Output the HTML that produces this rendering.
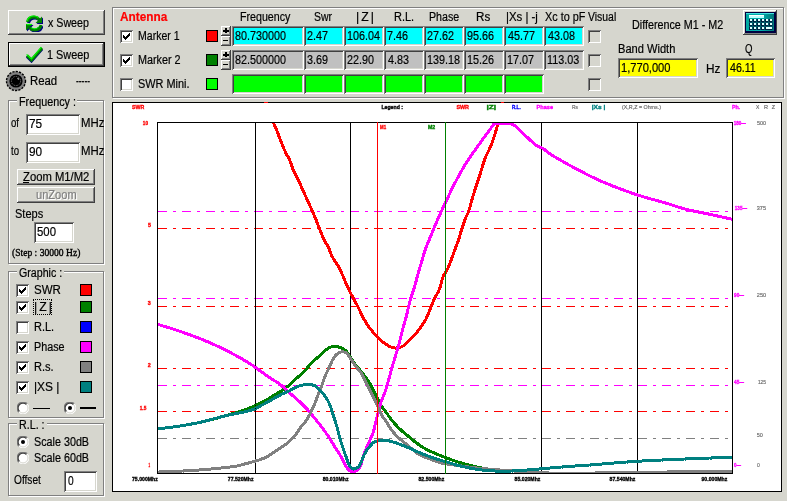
<!DOCTYPE html>
<html><head><meta charset="utf-8"><title>Antenna Analyzer</title>
<style>
html,body{margin:0;padding:0}
body{width:787px;height:501px;overflow:hidden;background:#D6D6CE;position:relative;
 font-family:"Liberation Sans",sans-serif;font-size:12px;color:#000}
.a{position:absolute;box-sizing:border-box}
.t{position:absolute;white-space:nowrap;line-height:14px;font-size:12px;transform-origin:0 0;display:block;-webkit-text-stroke-width:0.2px}
.btn{position:absolute;box-sizing:border-box;background:#D6D6CE;
 box-shadow:inset -1px -1px #404040,inset 1px 1px #fff,inset -2px -2px #808080,inset 2px 2px #D6D6CE}
.btnd{position:absolute;box-sizing:border-box;background:#D6D6CE;border:1px solid #000;
 box-shadow:inset -1px -1px #404040,inset 1px 1px #fff,inset -2px -2px #808080,inset 2px 2px #D6D6CE}
.ed{position:absolute;box-sizing:border-box;background:#fff;
 box-shadow:inset 1px 1px #808080,inset -1px -1px #fff,inset 2px 2px #404040,inset -2px -2px #D6D6CE}
.gb{position:absolute;box-sizing:border-box;border:1px solid #808080;
 box-shadow:1px 1px 0 #fff,inset 1px 1px 0 #fff}
.gl{position:absolute;background:#D6D6CE;height:12px}
.sw{position:absolute;box-sizing:border-box;border:1px solid #000;width:12px;height:12px}
.cb{position:absolute;box-sizing:border-box;width:13px;height:13px;background:#fff;
 box-shadow:inset 1px 1px #808080,inset -1px -1px #fff,inset 2px 2px #404040,inset -2px -2px #D6D6CE}
.cb svg,.rb svg{position:absolute;left:0;top:0}
.rb{position:absolute;width:12px;height:12px}
</style></head>
<body>
<div id="app" style="position:absolute;left:0;top:0;width:787px;height:501px;will-change:transform">
<div class="btn" style="left:8px;top:10px;width:97px;height:25px"></div>
<svg class="a" style="left:26px;top:15px" width="17" height="17" viewBox="0 0 17 17"><g transform="translate(1,1)"><path d="M1.5 7Q2.5 2 8 2Q11 2 13 4.5" fill="none" stroke="#000080" stroke-width="3"/><path d="M16 1.5V8H9.5z" fill="#000080"/><path d="M15 10Q14 15 8.5 15Q5.5 15 3.5 12.5" fill="none" stroke="#000080" stroke-width="3"/><path d="M0 15.5V9H6.5z" fill="#000080"/></g><path d="M1.5 7Q2.5 2 8 2Q11 2 13 4.5" fill="none" stroke="#008000" stroke-width="3"/><path d="M16 1.5V8H9.5z" fill="#008000"/><path d="M15 10Q14 15 8.5 15Q5.5 15 3.5 12.5" fill="none" stroke="#008000" stroke-width="3"/><path d="M0 15.5V9H6.5z" fill="#008000"/><path d="M1 6Q2.5 1 8 1Q10.5 1 12.5 2.5" fill="none" stroke="#00FF00" stroke-width="1.2"/><path d="M0.5 9.5H6" fill="none" stroke="#00FF00" stroke-width="1.2"/><path d="M5 12.5Q6.5 13.8 8.5 13.8Q11 13.8 12.5 12" fill="none" stroke="#00FF00" stroke-width="1"/></svg>
<span class="t" style="left:47.50px;top:16px;transform:scaleX(0.8891);">x Sweep</span>
<div class="btnd" style="left:8px;top:42px;width:97px;height:25px"></div>
<svg class="a" style="left:25px;top:46px" width="19" height="17" viewBox="0 0 19 17"><path d="M2 10.5L6.5 15L17 3" fill="none" stroke="#000080" stroke-width="3"/><path d="M2 9.5L6.5 14L17 2" fill="none" stroke="#008000" stroke-width="3"/><path d="M1.6 8.4L6.5 13L16.4 1.2" fill="none" stroke="#00FF00" stroke-width="1.2"/></svg>
<span class="t" style="left:47.09px;top:48px;transform:scaleX(0.9067);">1 Sweep</span>
<svg class="a" style="left:5px;top:70px" width="22" height="22" viewBox="0 0 22 22"><circle cx="11" cy="11" r="9.5" fill="#808080" stroke="#000" stroke-width="1.4" stroke-dasharray="2.2 1.2"/><circle cx="11" cy="11" r="6.6" fill="#000"/><circle cx="11" cy="11" r="4.6" fill="none" stroke="#808080" stroke-width="0.8" stroke-dasharray="1.6 1"/><path d="M12.5 8L14 9.5" stroke="#a0a0a0" stroke-width="1.2"/></svg>
<span class="t" style="left:29.75px;top:74px;transform:scaleX(0.9481);">Read</span>
<span class="t" style="left:76.00px;top:74px;transform:scaleX(0.7000);">-----</span>
<div class="gb" style="left:8px;top:100px;width:96px;height:164px"></div><div class="gl" style="left:16.7px;top:96px;width:60.8px;height:10px"></div><span class="t" style="left:18.80px;top:95px;transform:scaleX(0.8984);">Frequency :</span>
<span class="t" style="left:11.00px;top:116px;transform:scaleX(0.8000);">of</span>
<div class="ed" style="left:26px;top:114px;width:54px;height:21px"></div>
<span class="t" style="left:28.89px;top:116px;transform:scaleX(0.9077);font-size:13px;line-height:15px;">75</span>
<span class="t" style="left:80.85px;top:116px;transform:scaleX(0.9478);">MHz</span>
<span class="t" style="left:11.00px;top:144px;transform:scaleX(0.8000);">to</span>
<div class="ed" style="left:26px;top:142px;width:54px;height:21px"></div>
<span class="t" style="left:28.89px;top:144px;transform:scaleX(0.9077);font-size:13px;line-height:15px;">90</span>
<span class="t" style="left:80.85px;top:144px;transform:scaleX(0.9478);">MHz</span>
<div class="btn" style="left:17px;top:169px;width:78px;height:16px"></div>
<span class="t" style="left:22.70px;top:170px;transform:scaleX(0.9386);">Zoom M1/M2</span>
<div class="a" style="left:23px;top:182px;width:6px;height:1px;background:#000"></div>
<div class="btn" style="left:17px;top:187px;width:78px;height:16px"></div>
<span class="t" style="left:36.58px;top:189px;transform:scaleX(0.9238);color:#fff;">unZoom</span>
<span class="t" style="left:35.58px;top:188px;transform:scaleX(0.9238);color:#808080;">unZoom</span>
<span class="t" style="left:15.48px;top:207px;transform:scaleX(0.9172);">Steps</span>
<div class="ed" style="left:34px;top:222px;width:40px;height:21px"></div>
<span class="t" style="left:36.83px;top:224px;transform:scaleX(0.8750);font-size:13px;line-height:15px;">500</span>
<span class="t" style="left:12.40px;top:246px;transform:scaleX(0.9577);font-size:10px;font-family:'Liberation Serif',serif;-webkit-text-stroke:0.35px #000;">(Step : 30000 Hz)</span>
<div class="gb" style="left:8px;top:271px;width:96px;height:147px"></div><div class="gl" style="left:16.7px;top:267px;width:47.7px;height:10px"></div><span class="t" style="left:18.81px;top:266px;transform:scaleX(0.8872);">Graphic :</span>
<div class="cb" style="left:16px;top:284px;background:#fff"><svg width="13" height="13" viewBox="0 0 13 13" shape-rendering="crispEdges"><path d="M3 5h1v3h-1zM4 6h1v3h-1zM5 7h1v3h-1zM6 6h1v3h-1zM7 5h1v3h-1zM8 4h1v3h-1zM9 3h1v3h-1z" fill="#000"/></svg></div>
<span class="t" style="left:33.74px;top:283px;transform:scaleX(0.9577);">SWR</span>
<div class="sw" style="left:80px;top:284px;background:#FF0000"></div>
<div class="cb" style="left:16px;top:301px;background:#fff"><svg width="13" height="13" viewBox="0 0 13 13" shape-rendering="crispEdges"><path d="M3 5h1v3h-1zM4 6h1v3h-1zM5 7h1v3h-1zM6 6h1v3h-1zM7 5h1v3h-1zM8 4h1v3h-1zM9 3h1v3h-1z" fill="#000"/></svg></div>
<span class="t" style="left:33.68px;top:300px;transform:scaleX(1.0187);letter-spacing:2px;">|Z|</span>
<div class="sw" style="left:80px;top:301px;background:#008000"></div>
<div class="cb" style="left:16px;top:321px;background:#fff"></div>
<span class="t" style="left:33.79px;top:320px;transform:scaleX(0.9150);">R.L.</span>
<div class="sw" style="left:80px;top:321px;background:#0000FF"></div>
<div class="cb" style="left:16px;top:341px;background:#fff"><svg width="13" height="13" viewBox="0 0 13 13" shape-rendering="crispEdges"><path d="M3 5h1v3h-1zM4 6h1v3h-1zM5 7h1v3h-1zM6 6h1v3h-1zM7 5h1v3h-1zM8 4h1v3h-1zM9 3h1v3h-1z" fill="#000"/></svg></div>
<span class="t" style="left:33.80px;top:340px;transform:scaleX(0.8970);">Phase</span>
<div class="sw" style="left:80px;top:341px;background:#FF00FF"></div>
<div class="cb" style="left:16px;top:361px;background:#fff"><svg width="13" height="13" viewBox="0 0 13 13" shape-rendering="crispEdges"><path d="M3 5h1v3h-1zM4 6h1v3h-1zM5 7h1v3h-1zM6 6h1v3h-1zM7 5h1v3h-1zM8 4h1v3h-1zM9 3h1v3h-1z" fill="#000"/></svg></div>
<span class="t" style="left:33.78px;top:360px;transform:scaleX(0.9211);">R.s.</span>
<div class="sw" style="left:80px;top:361px;background:#808080"></div>
<div class="cb" style="left:16px;top:381px;background:#fff"><svg width="13" height="13" viewBox="0 0 13 13" shape-rendering="crispEdges"><path d="M3 5h1v3h-1zM4 6h1v3h-1zM5 7h1v3h-1zM6 6h1v3h-1zM7 5h1v3h-1zM8 4h1v3h-1zM9 3h1v3h-1z" fill="#000"/></svg></div>
<span class="t" style="left:33.71px;top:380px;transform:scaleX(0.9917);">|XS |</span>
<div class="sw" style="left:80px;top:381px;background:#008080"></div>
<div class="a" style="left:33px;top:299px;width:19px;height:16px;border:1px dotted #000"></div>
<div class="rb" style="left:17px;top:402px"><svg width="12" height="12" viewBox="0 0 12 12"><circle cx="6" cy="6" r="5.5" fill="#fff"/><path d="M10.2 1.8A5.5 5.5 0 0 0 1.8 10.2" fill="none" stroke="#808080" stroke-width="1.3"/><path d="M1.8 10.2A5.5 5.5 0 0 0 10.2 1.8" fill="none" stroke="#fff" stroke-width="1"/><path d="M9.5 2.5A4.6 4.6 0 0 0 2.5 9.5" fill="none" stroke="#404040" stroke-width="1.3"/><path d="M2.5 9.5A4.6 4.6 0 0 0 9.5 2.5" fill="none" stroke="#D6D6CE" stroke-width="1"/></svg></div>
<div class="a" style="left:33px;top:408px;width:17px;height:1px;background:#000"></div>
<div class="rb" style="left:64px;top:402px"><svg width="12" height="12" viewBox="0 0 12 12"><circle cx="6" cy="6" r="5.5" fill="#fff"/><path d="M10.2 1.8A5.5 5.5 0 0 0 1.8 10.2" fill="none" stroke="#808080" stroke-width="1.3"/><path d="M1.8 10.2A5.5 5.5 0 0 0 10.2 1.8" fill="none" stroke="#fff" stroke-width="1"/><path d="M9.5 2.5A4.6 4.6 0 0 0 2.5 9.5" fill="none" stroke="#404040" stroke-width="1.3"/><path d="M2.5 9.5A4.6 4.6 0 0 0 9.5 2.5" fill="none" stroke="#D6D6CE" stroke-width="1"/><circle cx="6" cy="6" r="2" fill="#000"/></svg></div>
<div class="a" style="left:80px;top:407px;width:16px;height:2px;background:#000"></div>
<div class="gb" style="left:8px;top:423px;width:96px;height:73px"></div><div class="gl" style="left:16.7px;top:419px;width:30.1px;height:10px"></div><span class="t" style="left:18.81px;top:418px;transform:scaleX(0.8926);">R.L. :</span>
<div class="rb" style="left:17px;top:436px"><svg width="12" height="12" viewBox="0 0 12 12"><circle cx="6" cy="6" r="5.5" fill="#fff"/><path d="M10.2 1.8A5.5 5.5 0 0 0 1.8 10.2" fill="none" stroke="#808080" stroke-width="1.3"/><path d="M1.8 10.2A5.5 5.5 0 0 0 10.2 1.8" fill="none" stroke="#fff" stroke-width="1"/><path d="M9.5 2.5A4.6 4.6 0 0 0 2.5 9.5" fill="none" stroke="#404040" stroke-width="1.3"/><path d="M2.5 9.5A4.6 4.6 0 0 0 9.5 2.5" fill="none" stroke="#D6D6CE" stroke-width="1"/><circle cx="6" cy="6" r="2" fill="#000"/></svg></div>
<span class="t" style="left:33.70px;top:435px;transform:scaleX(0.8967);">Scale 30dB</span>
<div class="rb" style="left:17px;top:452px"><svg width="12" height="12" viewBox="0 0 12 12"><circle cx="6" cy="6" r="5.5" fill="#fff"/><path d="M10.2 1.8A5.5 5.5 0 0 0 1.8 10.2" fill="none" stroke="#808080" stroke-width="1.3"/><path d="M1.8 10.2A5.5 5.5 0 0 0 10.2 1.8" fill="none" stroke="#fff" stroke-width="1"/><path d="M9.5 2.5A4.6 4.6 0 0 0 2.5 9.5" fill="none" stroke="#404040" stroke-width="1.3"/><path d="M2.5 9.5A4.6 4.6 0 0 0 9.5 2.5" fill="none" stroke="#D6D6CE" stroke-width="1"/></svg></div>
<span class="t" style="left:33.70px;top:451px;transform:scaleX(0.8967);">Scale 60dB</span>
<span class="t" style="left:13.90px;top:473px;transform:scaleX(0.8438);">Offset</span>
<div class="ed" style="left:64px;top:471px;width:33px;height:21px"></div>
<span class="t" style="left:67.50px;top:473px;transform:scaleX(0.7857);font-size:13px;line-height:15px;">0</span>
<div class="gb" style="left:112px;top:7px;width:672px;height:91px"></div>
<span class="t" style="left:119.80px;top:10px;transform:scaleX(0.9833);color:#FF0000;font-weight:bold;">Antenna</span>
<span class="t" style="left:239.71px;top:10px;transform:scaleX(0.8875);">Frequency</span>
<span class="t" style="left:313.73px;top:10px;transform:scaleX(0.8700);">Swr</span>
<span class="t" style="left:355.68px;top:10px;transform:scaleX(1.0188);letter-spacing:2px;">|Z|</span>
<span class="t" style="left:393.78px;top:10px;transform:scaleX(0.9150);">R.L.</span>
<span class="t" style="left:428.81px;top:10px;transform:scaleX(0.8879);">Phase</span>
<span class="t" style="left:476.03px;top:10px;transform:scaleX(0.9692);">Rs</span>
<span class="t" style="left:505.65px;top:10px;transform:scaleX(0.9500);">|Xs | -j</span>
<span class="t" style="left:545.00px;top:10px;transform:scaleX(0.9045);">Xc to pF</span>
<span class="t" style="left:588.20px;top:10px;transform:scaleX(0.8687);">Visual</span>
<div class="cb" style="left:120px;top:30px;background:#fff"><svg width="13" height="13" viewBox="0 0 13 13" shape-rendering="crispEdges"><path d="M3 5h1v3h-1zM4 6h1v3h-1zM5 7h1v3h-1zM6 6h1v3h-1zM7 5h1v3h-1zM8 4h1v3h-1zM9 3h1v3h-1z" fill="#000"/></svg></div>
<span class="t" style="left:137.72px;top:29px;transform:scaleX(0.8783);">Marker 1</span>
<div class="sw" style="left:206px;top:30px;background:#FF0000"></div>
<div class="btn" style="left:221px;top:26px;width:10px;height:10px"></div><div class="a" style="left:223px;top:30px;width:6px;height:2px;background:#000"></div><div class="a" style="left:225px;top:28px;width:2px;height:5px;background:#000"></div><div class="btn" style="left:221px;top:36px;width:10px;height:10px"></div><div class="a" style="left:223px;top:40px;width:5px;height:1px;background:#000"></div>
<div class="ed" style="left:232px;top:26px;width:72px;height:20px;background:#00FFFF"></div>
<span class="t" style="left:235.17px;top:28px;transform:scaleX(0.8300);font-size:13px;line-height:15px;">80.730000</span>
<div class="ed" style="left:304px;top:26px;width:40px;height:20px;background:#00FFFF"></div>
<span class="t" style="left:306.97px;top:28px;transform:scaleX(0.8300);font-size:13px;line-height:15px;">2.47</span>
<div class="ed" style="left:344px;top:26px;width:40px;height:20px;background:#00FFFF"></div>
<span class="t" style="left:346.97px;top:28px;transform:scaleX(0.8300);font-size:13px;line-height:15px;">106.04</span>
<div class="ed" style="left:384px;top:26px;width:40px;height:20px;background:#00FFFF"></div>
<span class="t" style="left:386.97px;top:28px;transform:scaleX(0.8300);font-size:13px;line-height:15px;">7.46</span>
<div class="ed" style="left:424px;top:26px;width:40px;height:20px;background:#00FFFF"></div>
<span class="t" style="left:426.97px;top:28px;transform:scaleX(0.8300);font-size:13px;line-height:15px;">27.62</span>
<div class="ed" style="left:464px;top:26px;width:40px;height:20px;background:#00FFFF"></div>
<span class="t" style="left:466.97px;top:28px;transform:scaleX(0.8300);font-size:13px;line-height:15px;">95.66</span>
<div class="ed" style="left:504px;top:26px;width:40px;height:20px;background:#00FFFF"></div>
<span class="t" style="left:507.80px;top:28px;transform:scaleX(0.8300);font-size:13px;line-height:15px;">45.77</span>
<div class="ed" style="left:544px;top:26px;width:40px;height:20px;background:#00FFFF"></div>
<span class="t" style="left:547.80px;top:28px;transform:scaleX(0.8300);font-size:13px;line-height:15px;">43.08</span>
<div class="cb" style="left:588px;top:30px;background:#D6D6CE"></div>
<div class="cb" style="left:120px;top:54px;background:#fff"><svg width="13" height="13" viewBox="0 0 13 13" shape-rendering="crispEdges"><path d="M3 5h1v3h-1zM4 6h1v3h-1zM5 7h1v3h-1zM6 6h1v3h-1zM7 5h1v3h-1zM8 4h1v3h-1zM9 3h1v3h-1z" fill="#000"/></svg></div>
<span class="t" style="left:137.70px;top:53px;transform:scaleX(0.9000);">Marker 2</span>
<div class="sw" style="left:206px;top:54px;background:#008000"></div>
<div class="btn" style="left:221px;top:50px;width:10px;height:10px"></div><div class="a" style="left:223px;top:54px;width:6px;height:2px;background:#000"></div><div class="a" style="left:225px;top:52px;width:2px;height:5px;background:#000"></div><div class="btn" style="left:221px;top:60px;width:10px;height:10px"></div><div class="a" style="left:223px;top:64px;width:5px;height:1px;background:#000"></div>
<div class="ed" style="left:232px;top:50px;width:72px;height:20px;background:#C0C0C0"></div>
<span class="t" style="left:235.17px;top:52px;transform:scaleX(0.8300);font-size:13px;line-height:15px;">82.500000</span>
<div class="ed" style="left:304px;top:50px;width:40px;height:20px;background:#C0C0C0"></div>
<span class="t" style="left:306.97px;top:52px;transform:scaleX(0.8300);font-size:13px;line-height:15px;">3.69</span>
<div class="ed" style="left:344px;top:50px;width:40px;height:20px;background:#C0C0C0"></div>
<span class="t" style="left:346.97px;top:52px;transform:scaleX(0.8300);font-size:13px;line-height:15px;">22.90</span>
<div class="ed" style="left:384px;top:50px;width:40px;height:20px;background:#C0C0C0"></div>
<span class="t" style="left:387.80px;top:52px;transform:scaleX(0.8300);font-size:13px;line-height:15px;">4.83</span>
<div class="ed" style="left:424px;top:50px;width:40px;height:20px;background:#C0C0C0"></div>
<span class="t" style="left:426.97px;top:52px;transform:scaleX(0.8300);font-size:13px;line-height:15px;">139.18</span>
<div class="ed" style="left:464px;top:50px;width:40px;height:20px;background:#C0C0C0"></div>
<span class="t" style="left:466.97px;top:52px;transform:scaleX(0.8300);font-size:13px;line-height:15px;">15.26</span>
<div class="ed" style="left:504px;top:50px;width:40px;height:20px;background:#C0C0C0"></div>
<span class="t" style="left:506.97px;top:52px;transform:scaleX(0.8300);font-size:13px;line-height:15px;">17.07</span>
<div class="ed" style="left:544px;top:50px;width:40px;height:20px;background:#C0C0C0"></div>
<span class="t" style="left:546.97px;top:52px;transform:scaleX(0.8300);font-size:13px;line-height:15px;">113.03</span>
<div class="cb" style="left:588px;top:54px;background:#D6D6CE"></div>
<div class="cb" style="left:120px;top:78px;background:#fff"></div>
<span class="t" style="left:137.69px;top:77px;transform:scaleX(0.9091);">SWR Mini.</span>
<div class="sw" style="left:206px;top:78px;background:#00FF00"></div>
<div class="ed" style="left:232px;top:74px;width:72px;height:20px;background:#00FF00"></div>
<div class="ed" style="left:304px;top:74px;width:40px;height:20px;background:#00FF00"></div>
<div class="ed" style="left:344px;top:74px;width:40px;height:20px;background:#00FF00"></div>
<div class="ed" style="left:384px;top:74px;width:40px;height:20px;background:#00FF00"></div>
<div class="ed" style="left:424px;top:74px;width:40px;height:20px;background:#00FF00"></div>
<div class="ed" style="left:464px;top:74px;width:40px;height:20px;background:#00FF00"></div>
<div class="ed" style="left:504px;top:74px;width:40px;height:20px;background:#00FF00"></div>
<div class="cb" style="left:588px;top:78px;background:#D6D6CE"></div>
<span class="t" style="left:631.60px;top:18px;transform:scaleX(0.8960);">Difference M1 - M2</span>
<span class="t" style="left:617.58px;top:42px;transform:scaleX(0.9250);">Band Width</span>
<span class="t" style="left:744.50px;top:42px;transform:scaleX(0.8000);">Q</span>
<div class="ed" style="left:618px;top:58px;width:80px;height:20px;background:#FFFF00"></div>
<span class="t" style="left:620.84px;top:60px;transform:scaleX(0.8554);font-size:13px;line-height:15px;">1,770,000</span>
<span class="t" style="left:705.72px;top:62px;transform:scaleX(0.9846);">Hz</span>
<div class="ed" style="left:726px;top:58px;width:49px;height:20px;background:#FFFF00"></div>
<span class="t" style="left:729.70px;top:60px;transform:scaleX(0.8161);font-size:13px;line-height:15px;">46.11</span>
<div class="btn" style="left:743px;top:10px;width:34px;height:25px"></div>
<svg class="a" style="left:745px;top:12px" width="31" height="21" viewBox="0 0 31 21" shape-rendering="crispEdges"><defs><linearGradient id="cg" x1="0" y1="0" x2="1" y2="0"><stop offset="0" stop-color="#00A8A0"/><stop offset="0.5" stop-color="#00B0B0"/><stop offset="1" stop-color="#007878"/></linearGradient></defs><rect x="0" y="0" width="31" height="21" fill="#000040"/><rect x="1" y="1" width="28" height="18" fill="url(#cg)"/><rect x="1" y="1" width="28" height="1" fill="#40E0E0"/><rect x="4" y="7" width="24" height="11" fill="#005868"/><rect x="4" y="3" width="15" height="3" fill="#C0FFFF"/><rect x="4" y="3" width="15" height="1" fill="#FFFFFF"/><rect x="4" y="7" width="3" height="3" fill="#002040"/><rect x="5" y="7" width="2" height="2" fill="#E0FFFF"/><rect x="8" y="7" width="3" height="3" fill="#002040"/><rect x="9" y="7" width="2" height="2" fill="#E0FFFF"/><rect x="12" y="7" width="3" height="3" fill="#002040"/><rect x="13" y="7" width="2" height="2" fill="#E0FFFF"/><rect x="16" y="7" width="3" height="3" fill="#002040"/><rect x="17" y="7" width="2" height="2" fill="#E0FFFF"/><rect x="20" y="7" width="3" height="3" fill="#002040"/><rect x="21" y="7" width="2" height="2" fill="#E0FFFF"/><rect x="24" y="7" width="3" height="3" fill="#002040"/><rect x="25" y="7" width="2" height="2" fill="#E0FFFF"/><rect x="4" y="11" width="3" height="3" fill="#002040"/><rect x="5" y="11" width="2" height="2" fill="#E0FFFF"/><rect x="8" y="11" width="3" height="3" fill="#002040"/><rect x="9" y="11" width="2" height="2" fill="#E0FFFF"/><rect x="12" y="11" width="3" height="3" fill="#002040"/><rect x="13" y="11" width="2" height="2" fill="#E0FFFF"/><rect x="16" y="11" width="3" height="3" fill="#002040"/><rect x="17" y="11" width="2" height="2" fill="#E0FFFF"/><rect x="20" y="11" width="3" height="3" fill="#002040"/><rect x="21" y="11" width="2" height="2" fill="#E0FFFF"/><rect x="24" y="11" width="3" height="3" fill="#002040"/><rect x="25" y="11" width="2" height="2" fill="#E0FFFF"/><rect x="4" y="15" width="3" height="3" fill="#002040"/><rect x="5" y="15" width="2" height="2" fill="#E0FFFF"/><rect x="8" y="15" width="3" height="3" fill="#002040"/><rect x="9" y="15" width="2" height="2" fill="#E0FFFF"/><rect x="12" y="15" width="3" height="3" fill="#002040"/><rect x="13" y="15" width="2" height="2" fill="#E0FFFF"/><rect x="16" y="15" width="3" height="3" fill="#002040"/><rect x="17" y="15" width="2" height="2" fill="#E0FFFF"/><rect x="20" y="15" width="7" height="3" fill="#002040"/><rect x="21" y="15" width="6" height="2" fill="#E0FFFF"/></svg>
<svg class="a" style="left:0;top:0" width="787" height="501" viewBox="0 0 787 501" font-family="&quot;Liberation Sans&quot;,sans-serif">
<rect x="112.5" y="102.5" width="669" height="389" fill="#fff" stroke="#000" stroke-width="1" shape-rendering="crispEdges"/>
<rect x="264" y="102" width="4" height="1" fill="#FF0000"/><rect x="501" y="102" width="3" height="1" fill="#FF0000"/>
<g>
<line x1="158" y1="228.5" x2="729" y2="228.5" stroke="#FF0000" stroke-width="1" stroke-dasharray="9 6 3 6" shape-rendering="crispEdges"/>
<line x1="158" y1="306.5" x2="729" y2="306.5" stroke="#FF0000" stroke-width="1" stroke-dasharray="9 6 3 6" shape-rendering="crispEdges"/>
<line x1="158" y1="368.5" x2="729" y2="368.5" stroke="#FF0000" stroke-width="1" stroke-dasharray="9 6 3 6" shape-rendering="crispEdges"/>
<line x1="158" y1="411.5" x2="729" y2="411.5" stroke="#FF0000" stroke-width="1" stroke-dasharray="9 6 3 6" shape-rendering="crispEdges"/>
<line x1="158" y1="211.5" x2="729" y2="211.5" stroke="#FF00FF" stroke-width="1" stroke-dasharray="9 6 3 6" shape-rendering="crispEdges"/>
<line x1="158" y1="298.5" x2="729" y2="298.5" stroke="#FF00FF" stroke-width="1" stroke-dasharray="9 6 3 6" shape-rendering="crispEdges"/>
<line x1="158" y1="385.5" x2="729" y2="385.5" stroke="#FF00FF" stroke-width="1" stroke-dasharray="9 6 3 6" shape-rendering="crispEdges"/>
<line x1="158" y1="438.5" x2="729" y2="438.5" stroke="#808080" stroke-width="1" stroke-dasharray="9 6 3 6" shape-rendering="crispEdges"/>
</g>
<g shape-rendering="crispEdges">
<rect x="255" y="122" width="1" height="352" fill="#000"/>
<rect x="350" y="122" width="1" height="352" fill="#000"/>
<rect x="541" y="122" width="1" height="352" fill="#000"/>
<rect x="637" y="122" width="1" height="352" fill="#000"/>
<rect x="157.5" y="122.5" width="575" height="351" fill="none" stroke="#000" stroke-width="1"/>
</g>
<clipPath id="cp"><rect x="158" y="123" width="574" height="350"/></clipPath>
<g clip-path="url(#cp)" shape-rendering="crispEdges">
<polyline points="273.2,122.0 274.2,124.3 275.2,126.7 276.2,129.1 277.2,131.6 278.2,134.1 279.2,136.7 280.2,139.4 281.2,142.1 282.2,144.6 283.2,147.0 284.2,149.4 285.2,151.6 286.2,153.7 287.2,155.5 288.2,157.2 289.2,159.1 290.2,161.3 291.2,164.2 292.2,167.3 293.2,170.0 294.2,172.0 295.2,173.8 296.2,175.6 297.2,177.5 298.2,179.6 299.2,181.8 300.2,184.1 301.2,186.4 302.2,188.7 303.2,190.9 304.2,193.1 305.2,195.3 306.2,197.5 307.2,199.7 308.2,201.9 309.2,204.1 310.2,206.3 311.2,208.5 312.2,210.8 313.2,213.0 314.2,215.3 315.2,217.7 316.2,220.2 317.2,222.7 318.2,225.3 319.2,227.8 320.2,230.4 321.2,233.0 322.2,235.6 323.2,238.0 324.2,240.1 325.2,241.9 326.2,243.5 327.2,245.1 328.2,246.9 329.2,249.2 330.2,252.0 331.2,254.6 332.2,256.6 333.2,258.3 334.2,259.9 335.2,261.3 336.2,262.8 337.2,264.5 338.2,266.2 339.2,268.1 340.2,270.0 341.2,272.1 342.2,274.3 343.2,276.6 344.2,278.9 345.2,281.3 346.2,283.7 347.2,286.0 348.2,288.2 349.2,290.4 350.2,292.4 351.2,294.3 352.2,296.2 353.2,298.0 354.2,299.8 355.2,301.6 356.2,303.5 357.2,305.4 358.2,307.4 359.2,309.4 360.2,311.5 361.2,313.6 362.2,315.6 363.2,317.6 364.2,319.5 365.2,321.2 366.2,322.9 367.2,324.5 368.2,326.0 369.2,327.4 370.2,328.7 371.2,330.0 372.2,331.2 373.2,332.4 374.2,333.6 375.2,334.6 376.2,335.7 377.2,336.7 378.2,337.7 379.2,338.7 380.2,339.6 381.2,340.5 382.2,341.4 383.2,342.2 384.2,343.0 385.2,343.7 386.2,344.4 387.2,345.0 388.2,345.7 389.2,346.2 390.2,346.7 391.2,347.1 392.2,347.4 393.2,347.7 394.2,347.9 395.2,348.0 396.2,348.0 397.2,347.9 398.2,347.7 399.2,347.5 400.2,347.2 401.2,346.9 402.2,346.5 403.2,345.9 404.2,345.2 405.2,344.5 406.2,343.6 407.2,342.5 408.2,341.3 409.2,340.2 410.2,339.1 411.2,338.2 412.2,337.3 413.2,336.4 414.2,335.5 415.2,334.5 416.2,333.4 417.2,332.1 418.2,330.7 419.2,329.3 420.2,327.9 421.2,326.5 422.2,325.1 423.2,323.7 424.2,322.2 425.2,320.5 426.2,318.6 427.2,316.4 428.2,314.1 429.2,311.6 430.2,309.1 431.2,306.6 432.2,304.1 433.2,301.6 434.2,299.4 435.2,297.3 436.2,295.4 437.2,293.6 438.2,291.8 439.2,289.6 440.2,287.0 441.2,283.2 442.2,279.3 443.2,276.4 444.2,274.4 445.2,272.8 446.2,271.3 447.2,269.7 448.2,267.6 449.2,265.2 450.2,262.6 451.2,259.9 452.2,257.2 453.2,254.4 454.2,251.5 455.2,248.8 456.2,246.2 457.2,243.6 458.2,240.9 459.2,237.8 460.2,234.4 461.2,231.0 462.2,227.8 463.2,224.7 464.2,221.7 465.2,219.0 466.2,216.6 467.2,214.7 468.2,212.5 469.2,209.5 470.2,206.1 471.2,202.4 472.2,198.7 473.2,195.4 474.2,192.2 475.2,189.0 476.2,185.9 477.2,182.9 478.2,179.8 479.2,176.8 480.2,173.7 481.2,170.4 482.2,167.2 483.2,163.9 484.2,160.8 485.2,158.0 486.2,155.6 487.2,153.5 488.2,151.5 489.2,149.5 490.2,147.4 491.2,145.0 492.2,142.4 493.2,139.6 494.2,136.6 495.2,133.4 496.2,129.7 497.2,126.0 498.2,122.0" fill="none" stroke="#FF0000" stroke-width="3" stroke-linejoin="round" stroke-linecap="butt"/>
<polyline points="157.5,428.8 158.5,428.7 159.5,428.6 160.5,428.5 161.5,428.4 162.5,428.3 163.5,428.2 164.5,428.1 165.5,428.0 166.5,427.9 167.5,427.7 168.5,427.6 169.5,427.5 170.5,427.4 171.5,427.2 172.5,427.1 173.5,427.0 174.5,426.8 175.5,426.7 176.5,426.5 177.5,426.4 178.5,426.2 179.5,426.1 180.5,425.9 181.5,425.7 182.5,425.6 183.5,425.4 184.5,425.2 185.5,425.1 186.5,424.9 187.5,424.7 188.5,424.6 189.5,424.4 190.5,424.2 191.5,424.0 192.5,423.8 193.5,423.7 194.5,423.5 195.5,423.3 196.5,423.1 197.5,422.9 198.5,422.7 199.5,422.5 200.5,422.3 201.5,422.0 202.5,421.8 203.5,421.6 204.5,421.3 205.5,421.1 206.5,420.9 207.5,420.6 208.5,420.4 209.5,420.1 210.5,419.8 211.5,419.6 212.5,419.3 213.5,419.0 214.5,418.8 215.5,418.5 216.5,418.2 217.5,418.0 218.5,417.7 219.5,417.4 220.5,417.1 221.5,416.8 222.5,416.6 223.5,416.3 224.5,416.0 225.5,415.7 226.5,415.5 227.5,415.2 228.5,414.9 229.5,414.6 230.5,414.3 231.5,414.0 232.5,413.8 233.5,413.5 234.5,413.2 235.5,412.9 236.5,412.6 237.5,412.3 238.5,411.9 239.5,411.6 240.5,411.3 241.5,411.0 242.5,410.6 243.5,410.3 244.5,410.0 245.5,409.6 246.5,409.2 247.5,408.9 248.5,408.5 249.5,408.1 250.5,407.7 251.5,407.2 252.5,406.8 253.5,406.4 254.5,405.9 255.5,405.5 256.5,405.0 257.5,404.6 258.5,404.1 259.5,403.6 260.5,403.1 261.5,402.6 262.5,402.1 263.5,401.6 264.5,401.1 265.5,400.5 266.5,399.9 267.5,399.3 268.5,398.7 269.5,398.1 270.5,397.4 271.5,396.8 272.5,396.2 273.5,395.6 274.5,395.0 275.5,394.4 276.5,393.8 277.5,393.2 278.5,392.6 279.5,392.0 280.5,391.4 281.5,390.7 282.5,390.1 283.5,389.4 284.5,388.7 285.5,388.0 286.5,387.3 287.5,386.6 288.5,385.8 289.5,385.0 290.5,384.1 291.5,383.2 292.5,382.2 293.5,381.2 294.5,380.2 295.5,379.2 296.5,378.3 297.5,377.5 298.5,376.6 299.5,375.8 300.5,375.0 301.5,374.1 302.5,373.2 303.5,372.2 304.5,371.1 305.5,369.9 306.5,368.7 307.5,367.6 308.5,366.4 309.5,365.3 310.5,364.3 311.5,363.2 312.5,362.2 313.5,361.2 314.5,360.2 315.5,359.3 316.5,358.4 317.5,357.5 318.5,356.7 319.5,355.9 320.5,355.1 321.5,354.2 322.5,353.3 323.5,352.2 324.5,351.2 325.5,350.3 326.5,349.4 327.5,348.8 328.5,348.1 329.5,347.5 330.5,347.1 331.5,346.8 332.5,346.6 333.5,346.5 334.5,346.4 335.5,346.4 336.5,346.5 337.5,346.8 338.5,347.0 339.5,347.3 340.5,347.7 341.5,348.1 342.5,348.6 343.5,349.2 344.5,349.9 345.5,350.6 346.5,351.6 347.5,352.9 348.5,354.4 349.5,356.0 350.5,357.4 351.5,359.0 352.5,360.5 353.5,362.1 354.5,363.6 355.5,365.0 356.5,366.3 357.5,367.4 358.5,368.5 359.5,369.6 360.5,370.7 361.5,371.9 362.5,373.1 363.5,374.4 364.5,375.7 365.5,377.0 366.5,378.4 367.5,379.8 368.5,381.3 369.5,382.9 370.5,384.5 371.5,386.2 372.5,388.2 373.5,390.3 374.5,392.4 375.5,394.4 376.5,396.4 377.5,398.5 378.5,400.4 379.5,402.3 380.5,404.2 381.5,405.9 382.5,407.5 383.5,408.9 384.5,410.1 385.5,411.5 386.5,412.9 387.5,414.3 388.5,415.7 389.5,417.1 390.5,418.5 391.5,419.8 392.5,421.1 393.5,422.2 394.5,423.4 395.5,424.5 396.5,425.6 397.5,426.7 398.5,427.7 399.5,428.7 400.5,429.6 401.5,430.6 402.5,431.5 403.5,432.3 404.5,433.2 405.5,434.0 406.5,434.8 407.5,435.6 408.5,436.4 409.5,437.2 410.5,438.1 411.5,438.9 412.5,439.7 413.5,440.6 414.5,441.4 415.5,442.2 416.5,442.9 417.5,443.6 418.5,444.4 419.5,445.0 420.5,445.7 421.5,446.4 422.5,447.0 423.5,447.7 424.5,448.3 425.5,448.9 426.5,449.4 427.5,450.0 428.5,450.5 429.5,450.9 430.5,451.4 431.5,451.8 432.5,452.2 433.5,452.7 434.5,453.1 435.5,453.5 436.5,453.9 437.5,454.4 438.5,454.8 439.5,455.2 440.5,455.6 441.5,456.0 442.5,456.4 443.5,456.8 444.5,457.2 445.5,457.6 446.5,458.0 447.5,458.3 448.5,458.7 449.5,459.1 450.5,459.4 451.5,459.8 452.5,460.1 453.5,460.5 454.5,460.8 455.5,461.1 456.5,461.5 457.5,461.8 458.5,462.1 459.5,462.4 460.5,462.7 461.5,463.0 462.5,463.3 463.5,463.6 464.5,463.9 465.5,464.2 466.5,464.4 467.5,464.7 468.5,465.0 469.5,465.2 470.5,465.5 471.5,465.8 472.5,466.0 473.5,466.3 474.5,466.5 475.5,466.7 476.5,467.0 477.5,467.2 478.5,467.4 479.5,467.6 480.5,467.8 481.5,468.0 482.5,468.3 483.5,468.5 484.5,468.6 485.5,468.8 486.5,469.0 487.5,469.2 488.5,469.3 489.5,469.5 490.5,469.6 491.5,469.8 492.5,469.9 493.5,470.1 494.5,470.2 495.5,470.4 496.5,470.5 497.5,470.7 498.5,470.8 499.5,470.9 500.5,471.0 501.5,471.1 502.5,471.1 503.5,471.2 504.5,471.2 505.5,471.2 506.5,471.2 507.5,471.2 508.5,471.1 509.5,471.1 510.5,471.1 511.5,471.0 512.5,471.0 513.5,470.9 514.5,470.8 515.5,470.8 516.5,470.7 517.5,470.7 518.5,470.6 519.5,470.5 520.5,470.5 521.5,470.4 522.5,470.3 523.5,470.3 524.5,470.2 525.5,470.1 526.5,470.1 527.5,470.0 528.5,469.9 529.5,469.8 530.5,469.8 531.5,469.7 532.5,469.6 533.5,469.5 534.5,469.4 535.5,469.3 536.5,469.2 537.5,469.2 538.5,469.1 539.5,469.0 540.5,468.9 541.5,468.8 542.5,468.7 543.5,468.7 544.5,468.6 545.5,468.5 546.5,468.4 547.5,468.3 548.5,468.2 549.5,468.1 550.5,468.0 551.5,467.9 552.5,467.8 553.5,467.7 554.5,467.7 555.5,467.6 556.5,467.5 557.5,467.4 558.5,467.3 559.5,467.2 560.5,467.1 561.5,467.0 562.5,467.0 563.5,466.9 564.5,466.8 565.5,466.7 566.5,466.7 567.5,466.6 568.5,466.5 569.5,466.4 570.5,466.4 571.5,466.3 572.5,466.2 573.5,466.2 574.5,466.1 575.5,466.0 576.5,465.9 577.5,465.9 578.5,465.8 579.5,465.7 580.5,465.7 581.5,465.6 582.5,465.5 583.5,465.5 584.5,465.4 585.5,465.3 586.5,465.3 587.5,465.2 588.5,465.1 589.5,465.0 590.5,465.0 591.5,464.9 592.5,464.8 593.5,464.7 594.5,464.7 595.5,464.6 596.5,464.5 597.5,464.4 598.5,464.3 599.5,464.3 600.5,464.2 601.5,464.1 602.5,464.0 603.5,463.9 604.5,463.8 605.5,463.8 606.5,463.7 607.5,463.6 608.5,463.5 609.5,463.4 610.5,463.3 611.5,463.2 612.5,463.2 613.5,463.1 614.5,463.0 615.5,462.9 616.5,462.8 617.5,462.7 618.5,462.7 619.5,462.6 620.5,462.5 621.5,462.4 622.5,462.3 623.5,462.3 624.5,462.2 625.5,462.1 626.5,462.0 627.5,462.0 628.5,461.9 629.5,461.8 630.5,461.7 631.5,461.7 632.5,461.6 633.5,461.5 634.5,461.5 635.5,461.4 636.5,461.3 637.5,461.3 638.5,461.2 639.5,461.2 640.5,461.1 641.5,461.1 642.5,461.0 643.5,460.9 644.5,460.9 645.5,460.8 646.5,460.8 647.5,460.7 648.5,460.7 649.5,460.6 650.5,460.6 651.5,460.5 652.5,460.5 653.5,460.4 654.5,460.4 655.5,460.3 656.5,460.3 657.5,460.2 658.5,460.2 659.5,460.1 660.5,460.1 661.5,460.0 662.5,460.0 663.5,459.9 664.5,459.9 665.5,459.8 666.5,459.8 667.5,459.7 668.5,459.7 669.5,459.7 670.5,459.6 671.5,459.6 672.5,459.5 673.5,459.5 674.5,459.4 675.5,459.4 676.5,459.4 677.5,459.3 678.5,459.3 679.5,459.2 680.5,459.2 681.5,459.1 682.5,459.1 683.5,459.1 684.5,459.0 685.5,459.0 686.5,458.9 687.5,458.9 688.5,458.9 689.5,458.8 690.5,458.8 691.5,458.7 692.5,458.7 693.5,458.7 694.5,458.6 695.5,458.6 696.5,458.5 697.5,458.5 698.5,458.5 699.5,458.4 700.5,458.4 701.5,458.3 702.5,458.3 703.5,458.3 704.5,458.2 705.5,458.2 706.5,458.2 707.5,458.1 708.5,458.1 709.5,458.0 710.5,458.0 711.5,458.0 712.5,457.9 713.5,457.9 714.5,457.9 715.5,457.8 716.5,457.8 717.5,457.8 718.5,457.7 719.5,457.7 720.5,457.7 721.5,457.6 722.5,457.6 723.5,457.6 724.5,457.5 725.5,457.5 726.5,457.5 727.5,457.4 728.5,457.4 729.5,457.4 730.5,457.3 731.5,457.3 731.7,457.3" fill="none" stroke="#008000" stroke-width="3" stroke-linejoin="round" stroke-linecap="butt"/>
<polyline points="157.5,324.3 158.5,324.6 159.5,324.9 160.5,325.2 161.5,325.5 162.5,325.8 163.5,326.1 164.5,326.4 165.5,326.7 166.5,327.0 167.5,327.3 168.5,327.6 169.5,327.9 170.5,328.2 171.5,328.6 172.5,328.9 173.5,329.2 174.5,329.5 175.5,329.9 176.5,330.2 177.5,330.5 178.5,330.9 179.5,331.2 180.5,331.5 181.5,331.9 182.5,332.2 183.5,332.6 184.5,332.9 185.5,333.3 186.5,333.6 187.5,334.0 188.5,334.3 189.5,334.7 190.5,335.1 191.5,335.4 192.5,335.8 193.5,336.2 194.5,336.5 195.5,336.9 196.5,337.3 197.5,337.7 198.5,338.1 199.5,338.5 200.5,338.8 201.5,339.2 202.5,339.6 203.5,340.1 204.5,340.5 205.5,340.9 206.5,341.3 207.5,341.7 208.5,342.1 209.5,342.6 210.5,343.0 211.5,343.5 212.5,343.9 213.5,344.4 214.5,344.8 215.5,345.3 216.5,345.7 217.5,346.2 218.5,346.7 219.5,347.1 220.5,347.6 221.5,348.1 222.5,348.6 223.5,349.1 224.5,349.6 225.5,350.1 226.5,350.6 227.5,351.1 228.5,351.6 229.5,352.1 230.5,352.6 231.5,353.2 232.5,353.7 233.5,354.2 234.5,354.7 235.5,355.3 236.5,355.8 237.5,356.4 238.5,356.9 239.5,357.5 240.5,358.0 241.5,358.6 242.5,359.2 243.5,359.8 244.5,360.4 245.5,361.0 246.5,361.6 247.5,362.2 248.5,362.8 249.5,363.4 250.5,364.0 251.5,364.7 252.5,365.3 253.5,366.0 254.5,366.7 255.5,367.4 256.5,368.2 257.5,368.9 258.5,369.6 259.5,370.4 260.5,371.1 261.5,371.8 262.5,372.6 263.5,373.3 264.5,374.0 265.5,374.7 266.5,375.4 267.5,376.1 268.5,376.8 269.5,377.5 270.5,378.2 271.5,378.8 272.5,379.5 273.5,380.1 274.5,380.7 275.5,381.3 276.5,381.9 277.5,382.6 278.5,383.2 279.5,383.9 280.5,384.7 281.5,385.5 282.5,386.4 283.5,387.3 284.5,388.3 285.5,389.2 286.5,390.2 287.5,391.1 288.5,392.1 289.5,392.9 290.5,393.8 291.5,394.6 292.5,395.5 293.5,396.3 294.5,397.1 295.5,398.0 296.5,398.9 297.5,399.7 298.5,400.7 299.5,401.6 300.5,402.5 301.5,403.5 302.5,404.5 303.5,405.5 304.5,406.5 305.5,407.5 306.5,408.6 307.5,409.6 308.5,410.8 309.5,411.9 310.5,413.1 311.5,414.3 312.5,415.5 313.5,416.8 314.5,418.0 315.5,419.3 316.5,420.5 317.5,421.7 318.5,423.0 319.5,424.3 320.5,425.6 321.5,426.9 322.5,428.2 323.5,429.5 324.5,430.9 325.5,432.3 326.5,433.7 327.5,435.2 328.5,436.6 329.5,438.2 330.5,439.7 331.5,441.4 332.5,443.0 333.5,444.7 334.5,446.4 335.5,448.0 336.5,449.6 337.5,451.1 338.5,452.6 339.5,454.2 340.5,455.8 341.5,457.7 342.5,459.7 343.5,461.7 344.5,463.6 345.5,465.3 346.5,467.0 347.5,468.5 348.5,469.6 349.5,470.5 350.5,471.2 351.5,471.3 352.5,471.3 353.5,471.3 354.5,471.3 355.5,471.1 356.5,470.6 357.5,469.8 358.5,468.7 359.5,467.5 360.5,465.8 361.5,462.8 362.5,459.0 363.5,455.5 364.5,452.8 365.5,450.3 366.5,447.9 367.5,445.5 368.5,443.3 369.5,441.1 370.5,438.8 371.5,436.5 372.5,434.3 373.5,431.6 374.5,427.7 375.5,422.8 376.5,419.1 377.5,415.6 378.5,411.8 379.5,407.6 380.5,403.7 381.5,400.7 382.5,398.2 383.5,395.8 384.5,393.4 385.5,390.5 386.5,387.3 387.5,383.9 388.5,380.3 389.5,376.7 390.5,373.0 391.5,369.4 392.5,365.9 393.5,362.5 394.5,359.3 395.5,356.0 396.5,352.7 397.5,349.4 398.5,345.9 399.5,342.0 400.5,338.0 401.5,333.8 402.5,329.8 403.5,326.2 404.5,323.1 405.5,319.6 406.5,315.7 407.5,311.4 408.5,307.0 409.5,302.8 410.5,299.0 411.5,295.8 412.5,293.0 413.5,290.1 414.5,286.9 415.5,283.3 416.5,279.5 417.5,275.8 418.5,272.3 419.5,268.8 420.5,265.5 421.5,262.1 422.5,258.7 423.5,255.2 424.5,252.0 425.5,249.1 426.5,246.4 427.5,243.9 428.5,241.5 429.5,239.0 430.5,236.5 431.5,234.1 432.5,231.7 433.5,229.3 434.5,226.9 435.5,224.6 436.5,222.2 437.5,219.9 438.5,217.7 439.5,215.4 440.5,213.2 441.5,211.0 442.5,208.9 443.5,206.8 444.5,204.7 445.5,202.6 446.5,200.4 447.5,198.3 448.5,196.2 449.5,194.0 450.5,191.9 451.5,189.8 452.5,187.8 453.5,185.7 454.5,183.8 455.5,181.9 456.5,180.0 457.5,178.1 458.5,176.3 459.5,174.4 460.5,172.6 461.5,170.9 462.5,169.1 463.5,167.4 464.5,165.7 465.5,164.1 466.5,162.5 467.5,160.9 468.5,159.4 469.5,157.9 470.5,156.4 471.5,155.0 472.5,153.5 473.5,152.1 474.5,150.7 475.5,149.4 476.5,148.0 477.5,146.6 478.5,145.3 479.5,143.9 480.5,142.5 481.5,141.1 482.5,139.7 483.5,138.3 484.5,136.9 485.5,135.6 486.5,134.2 487.5,132.8 488.5,131.5 489.5,130.2 490.5,128.8 491.5,127.3 492.5,125.8 493.5,124.6 494.5,124.0 495.5,123.7 496.5,123.5 497.5,123.5 498.5,123.5 499.5,123.5 500.5,123.5 501.5,123.5 502.5,123.5 503.5,123.5 504.5,123.5 505.5,123.5 506.5,123.5 507.5,123.5 508.5,123.5 509.5,123.5 510.5,123.5 511.5,123.9 512.5,124.4 513.5,124.9 514.5,125.5 515.5,126.3 516.5,127.2 517.5,128.1 518.5,129.1 519.5,130.1 520.5,131.0 521.5,131.9 522.5,132.8 523.5,133.8 524.5,134.8 525.5,135.7 526.5,136.7 527.5,137.6 528.5,138.6 529.5,139.5 530.5,140.4 531.5,141.3 532.5,142.2 533.5,143.1 534.5,144.0 535.5,144.8 536.5,145.5 537.5,146.1 538.5,146.6 539.5,147.0 540.5,147.4 541.5,147.8 542.5,148.3 543.5,149.0 544.5,149.6 545.5,150.4 546.5,151.1 547.5,151.9 548.5,152.7 549.5,153.4 550.5,154.1 551.5,154.8 552.5,155.5 553.5,156.1 554.5,156.7 555.5,157.3 556.5,157.9 557.5,158.5 558.5,159.0 559.5,159.6 560.5,160.2 561.5,160.8 562.5,161.3 563.5,161.9 564.5,162.5 565.5,163.0 566.5,163.6 567.5,164.1 568.5,164.7 569.5,165.2 570.5,165.8 571.5,166.3 572.5,166.9 573.5,167.4 574.5,167.9 575.5,168.5 576.5,169.0 577.5,169.5 578.5,170.0 579.5,170.6 580.5,171.1 581.5,171.6 582.5,172.1 583.5,172.6 584.5,173.2 585.5,173.7 586.5,174.2 587.5,174.7 588.5,175.2 589.5,175.7 590.5,176.2 591.5,176.7 592.5,177.2 593.5,177.7 594.5,178.1 595.5,178.6 596.5,179.1 597.5,179.5 598.5,180.0 599.5,180.4 600.5,180.9 601.5,181.3 602.5,181.7 603.5,182.2 604.5,182.6 605.5,183.0 606.5,183.4 607.5,183.8 608.5,184.3 609.5,184.7 610.5,185.1 611.5,185.5 612.5,185.9 613.5,186.3 614.5,186.7 615.5,187.1 616.5,187.4 617.5,187.8 618.5,188.2 619.5,188.6 620.5,189.0 621.5,189.3 622.5,189.7 623.5,190.1 624.5,190.5 625.5,190.8 626.5,191.2 627.5,191.5 628.5,191.9 629.5,192.2 630.5,192.6 631.5,192.9 632.5,193.3 633.5,193.6 634.5,193.9 635.5,194.3 636.5,194.6 637.5,194.9 638.5,195.3 639.5,195.6 640.5,195.9 641.5,196.2 642.5,196.5 643.5,196.8 644.5,197.1 645.5,197.4 646.5,197.7 647.5,198.0 648.5,198.2 649.5,198.5 650.5,198.8 651.5,199.1 652.5,199.4 653.5,199.6 654.5,199.9 655.5,200.2 656.5,200.5 657.5,200.7 658.5,201.0 659.5,201.3 660.5,201.6 661.5,201.9 662.5,202.1 663.5,202.4 664.5,202.7 665.5,203.0 666.5,203.3 667.5,203.6 668.5,203.9 669.5,204.2 670.5,204.6 671.5,204.9 672.5,205.2 673.5,205.5 674.5,205.8 675.5,206.1 676.5,206.4 677.5,206.8 678.5,207.1 679.5,207.4 680.5,207.7 681.5,208.0 682.5,208.2 683.5,208.5 684.5,208.8 685.5,209.1 686.5,209.3 687.5,209.6 688.5,209.8 689.5,210.1 690.5,210.3 691.5,210.5 692.5,210.7 693.5,211.0 694.5,211.2 695.5,211.4 696.5,211.6 697.5,211.8 698.5,212.0 699.5,212.2 700.5,212.4 701.5,212.6 702.5,212.8 703.5,213.0 704.5,213.2 705.5,213.4 706.5,213.6 707.5,213.8 708.5,214.0 709.5,214.2 710.5,214.4 711.5,214.7 712.5,214.9 713.5,215.1 714.5,215.3 715.5,215.5 716.5,215.8 717.5,216.0 718.5,216.2 719.5,216.4 720.5,216.7 721.5,216.9 722.5,217.1 723.5,217.3 724.5,217.6 725.5,217.8 726.5,218.0 727.5,218.2 728.5,218.5 729.5,218.7 730.5,218.9 731.5,219.2 731.7,219.2" fill="none" stroke="#FF00FF" stroke-width="3" stroke-linejoin="round" stroke-linecap="butt"/>
<polyline points="157.5,472.0 158.5,472.0 159.5,472.0 160.5,471.9 161.5,471.9 162.5,471.9 163.5,471.8 164.5,471.8 165.5,471.8 166.5,471.7 167.5,471.7 168.5,471.7 169.5,471.6 170.5,471.6 171.5,471.6 172.5,471.5 173.5,471.5 174.5,471.4 175.5,471.4 176.5,471.3 177.5,471.3 178.5,471.2 179.5,471.2 180.5,471.1 181.5,471.1 182.5,471.0 183.5,471.0 184.5,470.9 185.5,470.9 186.5,470.8 187.5,470.7 188.5,470.7 189.5,470.6 190.5,470.6 191.5,470.5 192.5,470.4 193.5,470.4 194.5,470.3 195.5,470.3 196.5,470.2 197.5,470.1 198.5,470.1 199.5,470.0 200.5,469.9 201.5,469.8 202.5,469.8 203.5,469.7 204.5,469.6 205.5,469.5 206.5,469.4 207.5,469.3 208.5,469.2 209.5,469.2 210.5,469.1 211.5,469.0 212.5,468.9 213.5,468.8 214.5,468.7 215.5,468.6 216.5,468.5 217.5,468.4 218.5,468.3 219.5,468.2 220.5,468.1 221.5,468.0 222.5,467.9 223.5,467.7 224.5,467.6 225.5,467.5 226.5,467.4 227.5,467.3 228.5,467.2 229.5,467.1 230.5,467.0 231.5,466.9 232.5,466.8 233.5,466.6 234.5,466.5 235.5,466.3 236.5,466.1 237.5,465.9 238.5,465.6 239.5,465.4 240.5,465.1 241.5,464.8 242.5,464.5 243.5,464.2 244.5,464.0 245.5,463.7 246.5,463.5 247.5,463.2 248.5,463.0 249.5,462.7 250.5,462.5 251.5,462.2 252.5,461.9 253.5,461.7 254.5,461.4 255.5,461.1 256.5,460.7 257.5,460.4 258.5,460.1 259.5,459.8 260.5,459.4 261.5,459.1 262.5,458.7 263.5,458.3 264.5,457.9 265.5,457.4 266.5,457.0 267.5,456.4 268.5,455.8 269.5,455.2 270.5,454.5 271.5,453.8 272.5,453.1 273.5,452.4 274.5,451.7 275.5,451.0 276.5,450.4 277.5,449.8 278.5,449.2 279.5,448.6 280.5,447.9 281.5,447.3 282.5,446.6 283.5,446.0 284.5,445.2 285.5,444.5 286.5,443.7 287.5,442.8 288.5,441.9 289.5,441.0 290.5,440.1 291.5,439.1 292.5,438.1 293.5,437.1 294.5,436.0 295.5,434.8 296.5,433.4 297.5,431.9 298.5,430.4 299.5,428.9 300.5,427.5 301.5,426.2 302.5,425.0 303.5,423.8 304.5,422.7 305.5,421.4 306.5,420.0 307.5,418.4 308.5,416.7 309.5,414.9 310.5,413.0 311.5,410.9 312.5,408.8 313.5,406.6 314.5,404.3 315.5,401.7 316.5,399.1 317.5,396.4 318.5,393.8 319.5,391.2 320.5,388.8 321.5,386.3 322.5,383.7 323.5,380.6 324.5,377.6 325.5,375.1 326.5,373.0 327.5,371.0 328.5,369.0 329.5,366.7 330.5,364.3 331.5,362.1 332.5,360.2 333.5,358.4 334.5,356.9 335.5,355.6 336.5,354.6 337.5,353.7 338.5,352.9 339.5,352.4 340.5,352.1 341.5,351.9 342.5,351.8 343.5,351.9 344.5,352.1 345.5,352.4 346.5,353.1 347.5,354.3 348.5,355.6 349.5,357.0 350.5,358.4 351.5,359.8 352.5,361.4 353.5,363.0 354.5,364.6 355.5,366.0 356.5,367.3 357.5,368.4 358.5,369.6 359.5,370.8 360.5,372.1 361.5,373.6 362.5,375.5 363.5,377.5 364.5,379.5 365.5,381.5 366.5,383.6 367.5,385.6 368.5,387.6 369.5,389.6 370.5,391.6 371.5,393.6 372.5,395.6 373.5,397.6 374.5,399.5 375.5,401.5 376.5,403.6 377.5,405.9 378.5,408.1 379.5,410.4 380.5,412.5 381.5,414.8 382.5,416.8 383.5,418.3 384.5,419.3 385.5,420.4 386.5,422.0 387.5,423.7 388.5,425.4 389.5,427.0 390.5,428.4 391.5,429.8 392.5,431.1 393.5,432.4 394.5,433.6 395.5,434.7 396.5,435.8 397.5,436.8 398.5,437.7 399.5,438.6 400.5,439.5 401.5,440.3 402.5,441.1 403.5,441.9 404.5,442.7 405.5,443.5 406.5,444.4 407.5,445.2 408.5,446.1 409.5,447.0 410.5,447.8 411.5,448.6 412.5,449.4 413.5,450.2 414.5,451.0 415.5,451.8 416.5,452.6 417.5,453.4 418.5,454.1 419.5,454.8 420.5,455.3 421.5,455.8 422.5,456.3 423.5,456.7 424.5,457.1 425.5,457.5 426.5,457.8 427.5,458.2 428.5,458.5 429.5,458.9 430.5,459.2 431.5,459.5 432.5,459.9 433.5,460.3 434.5,460.6 435.5,461.0 436.5,461.4 437.5,461.7 438.5,462.1 439.5,462.4 440.5,462.7 441.5,463.0 442.5,463.2 443.5,463.4 444.5,463.6 445.5,463.8 446.5,464.0 447.5,464.1 448.5,464.3 449.5,464.4 450.5,464.6 451.5,464.7 452.5,464.9 453.5,465.0 454.5,465.1 455.5,465.2 456.5,465.4 457.5,465.5 458.5,465.6 459.5,465.8 460.5,465.9 461.5,466.0 462.5,466.2 463.5,466.3 464.5,466.5 465.5,466.6 466.5,466.7 467.5,466.9 468.5,467.0 469.5,467.1 470.5,467.3 471.5,467.4 472.5,467.5 473.5,467.6 474.5,467.8 475.5,467.9 476.5,468.0 477.5,468.1 478.5,468.2 479.5,468.3 480.5,468.4 481.5,468.5 482.5,468.6 483.5,468.7 484.5,468.8 485.5,468.9 486.5,468.9 487.5,469.0 488.5,469.1 489.5,469.2 490.5,469.3 491.5,469.4 492.5,469.4 493.5,469.5 494.5,469.6 495.5,469.7 496.5,469.8 497.5,469.8 498.5,469.9 499.5,470.0 500.5,470.1 501.5,470.1 502.5,470.2 503.5,470.3 504.5,470.4 505.5,470.4 506.5,470.5 507.5,470.6 508.5,470.6 509.5,470.7 510.5,470.8 511.5,470.8 512.5,470.9 513.5,471.0 514.5,471.0 515.5,471.1 516.5,471.1 517.5,471.2 518.5,471.3 519.5,471.3 520.5,471.4 521.5,471.4 522.5,471.5 523.5,471.6 524.5,471.6 525.5,471.7 526.5,471.7 527.5,471.8 528.5,471.8 529.5,471.9 530.5,471.9 531.5,472.0 532.5,472.0 533.5,472.1 534.5,472.2 535.5,472.2 536.5,472.3 537.5,472.3 538.5,472.4 539.5,472.5 540.5,472.5 541.5,472.6 542.5,472.6 543.5,472.7 544.5,472.8 545.5,472.8 546.5,472.9 547.5,472.9 548.5,473.0 549.5,473.0 550.5,473.1 551.5,473.1 552.5,473.2 553.5,473.2 554.5,473.2 555.5,473.2 556.5,473.3 557.5,473.3 558.5,473.3 559.5,473.3 560.5,473.3 561.5,473.3 562.5,473.3 563.5,473.3 564.5,473.3 565.5,473.3 566.5,473.3 567.5,473.3 568.5,473.3 569.5,473.3 570.5,473.2 571.5,473.2 572.5,473.2 573.5,473.2 574.5,473.2 575.5,473.2 576.5,473.2 577.5,473.2 578.5,473.2 579.5,473.2 580.5,473.1 581.5,473.1 582.5,473.1 583.5,473.1 584.5,473.1 585.5,473.1 586.5,473.1 587.5,473.1 588.5,473.0 589.5,473.0 590.5,473.0 591.5,473.0 592.5,473.0 593.5,473.0 594.5,473.0 595.5,473.0 596.5,472.9 597.5,472.9 598.5,472.9 599.5,472.9 600.5,472.9 601.5,472.9 602.5,472.9 603.5,472.9 604.5,472.8 605.5,472.8 606.5,472.8 607.5,472.8 608.5,472.8 609.5,472.8 610.5,472.8 611.5,472.7 612.5,472.7 613.5,472.7 614.5,472.7 615.5,472.7 616.5,472.7 617.5,472.7 618.5,472.6 619.5,472.6 620.5,472.6 621.5,472.6 622.5,472.6 623.5,472.6 624.5,472.5 625.5,472.5 626.5,472.5 627.5,472.5 628.5,472.5 629.5,472.5 630.5,472.5 631.5,472.4 632.5,472.4 633.5,472.4 634.5,472.4 635.5,472.4 636.5,472.4 637.5,472.3 638.5,472.3 639.5,472.3 640.5,472.3 641.5,472.3 642.5,472.3 643.5,472.3 644.5,472.2 645.5,472.2 646.5,472.2 647.5,472.2 648.5,472.2 649.5,472.2 650.5,472.2 651.5,472.1 652.5,472.1 653.5,472.1 654.5,472.1 655.5,472.1 656.5,472.1 657.5,472.1 658.5,472.1 659.5,472.0 660.5,472.0 661.5,472.0 662.5,472.0 663.5,472.0 664.5,472.0 665.5,472.0 666.5,472.0 667.5,472.0 668.5,471.9 669.5,471.9 670.5,471.9 671.5,471.9 672.5,471.9 673.5,471.9 674.5,471.9 675.5,471.9 676.5,471.9 677.5,471.8 678.5,471.8 679.5,471.8 680.5,471.8 681.5,471.8 682.5,471.8 683.5,471.8 684.5,471.8 685.5,471.8 686.5,471.8 687.5,471.8 688.5,471.7 689.5,471.7 690.5,471.7 691.5,471.7 692.5,471.7 693.5,471.7 694.5,471.7 695.5,471.7 696.5,471.7 697.5,471.7 698.5,471.6 699.5,471.6 700.5,471.6 701.5,471.6 702.5,471.6 703.5,471.6 704.5,471.6 705.5,471.6 706.5,471.6 707.5,471.6 708.5,471.6 709.5,471.6 710.5,471.5 711.5,471.5 712.5,471.5 713.5,471.5 714.5,471.5 715.5,471.5 716.5,471.5 717.5,471.5 718.5,471.5 719.5,471.5 720.5,471.5 721.5,471.5 722.5,471.5 723.5,471.5 724.5,471.4 725.5,471.4 726.5,471.4 727.5,471.4 728.5,471.4 729.5,471.4 730.5,471.4 731.5,471.4 731.7,471.4" fill="none" stroke="#808080" stroke-width="3" stroke-linejoin="round" stroke-linecap="butt"/>
<polyline points="157.5,428.8 158.5,428.7 159.5,428.6 160.5,428.5 161.5,428.4 162.5,428.3 163.5,428.2 164.5,428.1 165.5,428.0 166.5,427.9 167.5,427.7 168.5,427.6 169.5,427.5 170.5,427.4 171.5,427.2 172.5,427.1 173.5,427.0 174.5,426.8 175.5,426.7 176.5,426.5 177.5,426.4 178.5,426.2 179.5,426.1 180.5,425.9 181.5,425.7 182.5,425.6 183.5,425.4 184.5,425.2 185.5,425.1 186.5,424.9 187.5,424.7 188.5,424.6 189.5,424.4 190.5,424.2 191.5,424.0 192.5,423.8 193.5,423.7 194.5,423.5 195.5,423.3 196.5,423.1 197.5,422.9 198.5,422.7 199.5,422.5 200.5,422.2 201.5,422.0 202.5,421.8 203.5,421.5 204.5,421.3 205.5,421.0 206.5,420.8 207.5,420.5 208.5,420.2 209.5,420.0 210.5,419.7 211.5,419.4 212.5,419.1 213.5,418.9 214.5,418.6 215.5,418.3 216.5,418.1 217.5,417.8 218.5,417.5 219.5,417.3 220.5,417.0 221.5,416.7 222.5,416.5 223.5,416.2 224.5,416.0 225.5,415.8 226.5,415.5 227.5,415.3 228.5,415.1 229.5,414.9 230.5,414.7 231.5,414.5 232.5,414.3 233.5,414.1 234.5,413.9 235.5,413.7 236.5,413.5 237.5,413.3 238.5,413.1 239.5,412.9 240.5,412.7 241.5,412.5 242.5,412.3 243.5,412.1 244.5,411.8 245.5,411.6 246.5,411.4 247.5,411.1 248.5,410.9 249.5,410.6 250.5,410.3 251.5,410.0 252.5,409.7 253.5,409.3 254.5,408.9 255.5,408.5 256.5,408.0 257.5,407.5 258.5,407.0 259.5,406.4 260.5,405.9 261.5,405.3 262.5,404.7 263.5,404.2 264.5,403.7 265.5,403.1 266.5,402.6 267.5,402.0 268.5,401.5 269.5,401.0 270.5,400.4 271.5,399.9 272.5,399.3 273.5,398.8 274.5,398.2 275.5,397.6 276.5,397.1 277.5,396.5 278.5,395.9 279.5,395.4 280.5,394.8 281.5,394.3 282.5,393.8 283.5,393.4 284.5,392.9 285.5,392.5 286.5,392.1 287.5,391.6 288.5,391.2 289.5,390.7 290.5,390.2 291.5,389.6 292.5,389.0 293.5,388.4 294.5,387.9 295.5,387.4 296.5,387.0 297.5,386.6 298.5,386.2 299.5,385.9 300.5,385.6 301.5,385.3 302.5,385.1 303.5,385.0 304.5,384.9 305.5,384.9 306.5,384.8 307.5,384.8 308.5,384.8 309.5,384.8 310.5,384.9 311.5,384.9 312.5,385.0 313.5,385.2 314.5,385.4 315.5,386.0 316.5,386.8 317.5,387.8 318.5,388.8 319.5,389.8 320.5,390.8 321.5,391.9 322.5,393.0 323.5,394.3 324.5,395.6 325.5,397.0 326.5,398.5 327.5,400.1 328.5,401.8 329.5,403.9 330.5,406.6 331.5,409.8 332.5,412.9 333.5,415.8 334.5,418.7 335.5,422.0 336.5,425.4 337.5,429.0 338.5,432.8 339.5,436.6 340.5,440.2 341.5,443.4 342.5,446.5 343.5,449.5 344.5,452.5 345.5,455.3 346.5,458.1 347.5,460.9 348.5,463.5 349.5,465.5 350.5,467.2 351.5,468.1 352.5,468.7 353.5,469.1 354.5,469.0 355.5,468.6 356.5,468.2 357.5,467.5 358.5,466.7 359.5,465.6 360.5,464.1 361.5,461.3 362.5,458.4 363.5,456.1 364.5,454.1 365.5,452.3 366.5,450.7 367.5,449.3 368.5,447.9 369.5,446.7 370.5,445.5 371.5,444.4 372.5,443.3 373.5,442.6 374.5,442.0 375.5,441.6 376.5,441.2 377.5,440.9 378.5,440.7 379.5,440.6 380.5,440.5 381.5,440.4 382.5,440.4 383.5,440.3 384.5,440.3 385.5,440.3 386.5,440.4 387.5,440.5 388.5,440.8 389.5,441.0 390.5,441.3 391.5,441.5 392.5,441.8 393.5,442.1 394.5,442.4 395.5,442.7 396.5,443.0 397.5,443.4 398.5,443.8 399.5,444.2 400.5,444.5 401.5,444.9 402.5,445.3 403.5,445.7 404.5,446.1 405.5,446.5 406.5,446.9 407.5,447.3 408.5,447.7 409.5,448.1 410.5,448.5 411.5,449.0 412.5,449.4 413.5,449.9 414.5,450.4 415.5,450.9 416.5,451.3 417.5,451.8 418.5,452.2 419.5,452.7 420.5,453.1 421.5,453.5 422.5,453.9 423.5,454.3 424.5,454.7 425.5,455.0 426.5,455.4 427.5,455.8 428.5,456.1 429.5,456.5 430.5,456.9 431.5,457.3 432.5,457.6 433.5,458.0 434.5,458.3 435.5,458.7 436.5,459.0 437.5,459.3 438.5,459.6 439.5,459.9 440.5,460.2 441.5,460.5 442.5,460.8 443.5,461.1 444.5,461.4 445.5,461.6 446.5,461.9 447.5,462.2 448.5,462.5 449.5,462.9 450.5,463.2 451.5,463.5 452.5,463.8 453.5,464.1 454.5,464.4 455.5,464.7 456.5,465.0 457.5,465.2 458.5,465.5 459.5,465.8 460.5,466.0 461.5,466.2 462.5,466.5 463.5,466.7 464.5,466.9 465.5,467.2 466.5,467.4 467.5,467.6 468.5,467.8 469.5,468.0 470.5,468.2 471.5,468.4 472.5,468.6 473.5,468.8 474.5,469.0 475.5,469.1 476.5,469.3 477.5,469.4 478.5,469.5 479.5,469.7 480.5,469.8 481.5,469.9 482.5,470.1 483.5,470.2 484.5,470.3 485.5,470.4 486.5,470.5 487.5,470.6 488.5,470.7 489.5,470.7 490.5,470.8 491.5,470.8 492.5,470.9 493.5,470.9 494.5,471.0 495.5,471.0 496.5,471.0 497.5,471.1 498.5,471.1 499.5,471.1 500.5,471.1 501.5,471.2 502.5,471.2 503.5,471.2 504.5,471.2 505.5,471.2 506.5,471.2 507.5,471.2 508.5,471.1 509.5,471.1 510.5,471.1 511.5,471.0 512.5,471.0 513.5,470.9 514.5,470.8 515.5,470.8 516.5,470.7 517.5,470.7 518.5,470.6 519.5,470.5 520.5,470.5 521.5,470.4 522.5,470.3 523.5,470.3 524.5,470.2 525.5,470.1 526.5,470.1 527.5,470.0 528.5,469.9 529.5,469.8 530.5,469.8 531.5,469.7 532.5,469.6 533.5,469.5 534.5,469.4 535.5,469.3 536.5,469.2 537.5,469.2 538.5,469.1 539.5,469.0 540.5,468.9 541.5,468.8 542.5,468.7 543.5,468.7 544.5,468.6 545.5,468.5 546.5,468.4 547.5,468.3 548.5,468.2 549.5,468.1 550.5,468.0 551.5,467.9 552.5,467.8 553.5,467.7 554.5,467.7 555.5,467.6 556.5,467.5 557.5,467.4 558.5,467.3 559.5,467.2 560.5,467.1 561.5,467.0 562.5,467.0 563.5,466.9 564.5,466.8 565.5,466.7 566.5,466.7 567.5,466.6 568.5,466.5 569.5,466.4 570.5,466.4 571.5,466.3 572.5,466.2 573.5,466.2 574.5,466.1 575.5,466.0 576.5,465.9 577.5,465.9 578.5,465.8 579.5,465.7 580.5,465.7 581.5,465.6 582.5,465.5 583.5,465.5 584.5,465.4 585.5,465.3 586.5,465.3 587.5,465.2 588.5,465.1 589.5,465.0 590.5,465.0 591.5,464.9 592.5,464.8 593.5,464.7 594.5,464.7 595.5,464.6 596.5,464.5 597.5,464.4 598.5,464.3 599.5,464.3 600.5,464.2 601.5,464.1 602.5,464.0 603.5,463.9 604.5,463.8 605.5,463.8 606.5,463.7 607.5,463.6 608.5,463.5 609.5,463.4 610.5,463.3 611.5,463.2 612.5,463.2 613.5,463.1 614.5,463.0 615.5,462.9 616.5,462.8 617.5,462.7 618.5,462.7 619.5,462.6 620.5,462.5 621.5,462.4 622.5,462.3 623.5,462.3 624.5,462.2 625.5,462.1 626.5,462.0 627.5,462.0 628.5,461.9 629.5,461.8 630.5,461.7 631.5,461.7 632.5,461.6 633.5,461.5 634.5,461.5 635.5,461.4 636.5,461.3 637.5,461.3 638.5,461.2 639.5,461.2 640.5,461.1 641.5,461.1 642.5,461.0 643.5,460.9 644.5,460.9 645.5,460.8 646.5,460.8 647.5,460.7 648.5,460.7 649.5,460.6 650.5,460.6 651.5,460.5 652.5,460.5 653.5,460.4 654.5,460.4 655.5,460.3 656.5,460.3 657.5,460.2 658.5,460.2 659.5,460.1 660.5,460.1 661.5,460.0 662.5,460.0 663.5,459.9 664.5,459.9 665.5,459.8 666.5,459.8 667.5,459.7 668.5,459.7 669.5,459.7 670.5,459.6 671.5,459.6 672.5,459.5 673.5,459.5 674.5,459.4 675.5,459.4 676.5,459.4 677.5,459.3 678.5,459.3 679.5,459.2 680.5,459.2 681.5,459.1 682.5,459.1 683.5,459.1 684.5,459.0 685.5,459.0 686.5,458.9 687.5,458.9 688.5,458.9 689.5,458.8 690.5,458.8 691.5,458.7 692.5,458.7 693.5,458.7 694.5,458.6 695.5,458.6 696.5,458.5 697.5,458.5 698.5,458.5 699.5,458.4 700.5,458.4 701.5,458.3 702.5,458.3 703.5,458.3 704.5,458.2 705.5,458.2 706.5,458.2 707.5,458.1 708.5,458.1 709.5,458.0 710.5,458.0 711.5,458.0 712.5,457.9 713.5,457.9 714.5,457.9 715.5,457.8 716.5,457.8 717.5,457.8 718.5,457.7 719.5,457.7 720.5,457.7 721.5,457.6 722.5,457.6 723.5,457.6 724.5,457.5 725.5,457.5 726.5,457.5 727.5,457.4 728.5,457.4 729.5,457.4 730.5,457.3 731.5,457.3 731.7,457.3" fill="none" stroke="#008080" stroke-width="3" stroke-linejoin="round" stroke-linecap="butt"/>
</g>
<g shape-rendering="crispEdges">
<rect x="377" y="122" width="1" height="352" fill="#FF0000"/>
<rect x="445" y="122" width="1" height="352" fill="#008000"/>
</g>
<text x="131.9" y="109" fill="#FF0000" font-size="6" font-weight="bold" textLength="12.3" lengthAdjust="spacingAndGlyphs" text-anchor="start" stroke="#FF0000" stroke-width="0.35">SWR</text>
<text x="381.4" y="109" fill="#000" font-size="6" font-weight="bold" textLength="21.6" lengthAdjust="spacingAndGlyphs" text-anchor="start" stroke="#000" stroke-width="0.35">Legend :</text>
<text x="456.4" y="109" fill="#FF0000" font-size="6" font-weight="bold" textLength="12.6" lengthAdjust="spacingAndGlyphs" text-anchor="start" stroke="#FF0000" stroke-width="0.35">SWR</text>
<text x="486.4" y="109" fill="#008000" font-size="6" font-weight="bold" textLength="9.8" lengthAdjust="spacingAndGlyphs" text-anchor="start" stroke="#008000" stroke-width="0.35">|Z|</text>
<text x="511.9" y="109" fill="#0000FF" font-size="6" font-weight="bold" textLength="8.8" lengthAdjust="spacingAndGlyphs" text-anchor="start" stroke="#0000FF" stroke-width="0.35">R.L.</text>
<text x="536.5" y="109" fill="#FF00FF" font-size="6" font-weight="bold" textLength="16.5" lengthAdjust="spacingAndGlyphs" text-anchor="start" stroke="#FF00FF" stroke-width="0.35">Phase</text>
<text x="572" y="109" fill="#707070" font-size="6" textLength="6" lengthAdjust="spacingAndGlyphs" text-anchor="start" stroke="#707070" stroke-width="0.2">Rs</text>
<text x="591.7" y="109" fill="#008080" font-size="6" font-weight="bold" textLength="13.6" lengthAdjust="spacingAndGlyphs" text-anchor="start" stroke="#008080" stroke-width="0.35">|Xs |</text>
<text x="622" y="109" fill="#707070" font-size="6" textLength="39" lengthAdjust="spacingAndGlyphs" text-anchor="start" stroke="#707070" stroke-width="0.2">(X,R,Z = Ohms.)</text>
<text x="731.9" y="109" fill="#FF00FF" font-size="6" font-weight="bold" textLength="8.2" lengthAdjust="spacingAndGlyphs" text-anchor="start" stroke="#FF00FF" stroke-width="0.35">Ph.</text>
<text x="755.9" y="109" fill="#707070" font-size="6" textLength="3.3" lengthAdjust="spacingAndGlyphs" text-anchor="start" stroke="#707070" stroke-width="0.2">X</text>
<text x="763.9" y="109" fill="#707070" font-size="6" textLength="4" lengthAdjust="spacingAndGlyphs" text-anchor="start" stroke="#707070" stroke-width="0.2">R</text>
<text x="771.8" y="109" fill="#707070" font-size="6" textLength="3.3" lengthAdjust="spacingAndGlyphs" text-anchor="start" stroke="#707070" stroke-width="0.2">Z</text>
<text x="380.1" y="129" fill="#FF0000" font-size="6" font-weight="bold" textLength="6.1" lengthAdjust="spacingAndGlyphs" text-anchor="start" stroke="#FF0000" stroke-width="0.35">M1</text>
<text x="427.9" y="129" fill="#008000" font-size="6" font-weight="bold" textLength="7.3" lengthAdjust="spacingAndGlyphs" text-anchor="start" stroke="#008000" stroke-width="0.35">M2</text>
<text x="142.8" y="125" fill="#FF0000" font-size="6" font-weight="bold" textLength="5.2" lengthAdjust="spacingAndGlyphs" text-anchor="start" stroke="#FF0000" stroke-width="0.35">10</text>
<text x="148" y="227" fill="#FF0000" font-size="6" font-weight="bold" textLength="3" lengthAdjust="spacingAndGlyphs" text-anchor="start" stroke="#FF0000" stroke-width="0.35">5</text>
<text x="147.8" y="305" fill="#FF0000" font-size="6" font-weight="bold" textLength="3" lengthAdjust="spacingAndGlyphs" text-anchor="start" stroke="#FF0000" stroke-width="0.35">3</text>
<text x="147.8" y="367" fill="#FF0000" font-size="6" font-weight="bold" textLength="3" lengthAdjust="spacingAndGlyphs" text-anchor="start" stroke="#FF0000" stroke-width="0.35">2</text>
<text x="139.7" y="410" fill="#FF0000" font-size="6" font-weight="bold" textLength="6.6" lengthAdjust="spacingAndGlyphs" text-anchor="start" stroke="#FF0000" stroke-width="0.35">1.5</text>
<text x="148.6" y="467" fill="#FF0000" font-size="6" font-weight="bold" textLength="1.6" lengthAdjust="spacingAndGlyphs" text-anchor="start" stroke="#FF0000" stroke-width="0.35">1</text>
<text x="733.8" y="125" fill="#FF00FF" font-size="6" font-weight="bold" textLength="12.1" lengthAdjust="spacingAndGlyphs" text-anchor="start" stroke="#FF00FF" stroke-width="0.35">180—</text>
<text x="734.8" y="210" fill="#FF00FF" font-size="6" font-weight="bold" textLength="12.2" lengthAdjust="spacingAndGlyphs" text-anchor="start" stroke="#FF00FF" stroke-width="0.35">135—</text>
<text x="734" y="297" fill="#FF00FF" font-size="6" font-weight="bold" textLength="10" lengthAdjust="spacingAndGlyphs" text-anchor="start" stroke="#FF00FF" stroke-width="0.35">90—</text>
<text x="734" y="384" fill="#FF00FF" font-size="6" font-weight="bold" textLength="10" lengthAdjust="spacingAndGlyphs" text-anchor="start" stroke="#FF00FF" stroke-width="0.35">45—</text>
<text x="734" y="467" fill="#FF00FF" font-size="6" font-weight="bold" textLength="7" lengthAdjust="spacingAndGlyphs" text-anchor="start" stroke="#FF00FF" stroke-width="0.35">0—</text>
<text x="757" y="125" fill="#707070" font-size="6" textLength="9.1" lengthAdjust="spacingAndGlyphs" text-anchor="start" stroke="#707070" stroke-width="0.2">500</text>
<text x="756.8" y="210" fill="#707070" font-size="6" textLength="9.2" lengthAdjust="spacingAndGlyphs" text-anchor="start" stroke="#707070" stroke-width="0.2">375</text>
<text x="756.8" y="297" fill="#707070" font-size="6" textLength="9.3" lengthAdjust="spacingAndGlyphs" text-anchor="start" stroke="#707070" stroke-width="0.2">250</text>
<text x="757.9" y="384" fill="#707070" font-size="6" textLength="8.2" lengthAdjust="spacingAndGlyphs" text-anchor="start" stroke="#707070" stroke-width="0.2">125</text>
<text x="756.7" y="437" fill="#707070" font-size="6" textLength="6.1" lengthAdjust="spacingAndGlyphs" text-anchor="start" stroke="#707070" stroke-width="0.2">50</text>
<text x="757" y="467" fill="#707070" font-size="6" textLength="2.8" lengthAdjust="spacingAndGlyphs" text-anchor="start" stroke="#707070" stroke-width="0.2">0</text>
<text x="132" y="481" fill="#000" font-size="6" font-weight="bold" textLength="25.8" lengthAdjust="spacingAndGlyphs" text-anchor="start" stroke="#000" stroke-width="0.35">75.000Mhz</text>
<text x="227.8" y="481" fill="#000" font-size="6" font-weight="bold" textLength="25.8" lengthAdjust="spacingAndGlyphs" text-anchor="start" stroke="#000" stroke-width="0.35">77.520Mhz</text>
<text x="322.7" y="481" fill="#000" font-size="6" font-weight="bold" textLength="25.8" lengthAdjust="spacingAndGlyphs" text-anchor="start" stroke="#000" stroke-width="0.35">80.010Mhz</text>
<text x="418.5" y="481" fill="#000" font-size="6" font-weight="bold" textLength="25.8" lengthAdjust="spacingAndGlyphs" text-anchor="start" stroke="#000" stroke-width="0.35">82.500Mhz</text>
<text x="514.6" y="481" fill="#000" font-size="6" font-weight="bold" textLength="25.8" lengthAdjust="spacingAndGlyphs" text-anchor="start" stroke="#000" stroke-width="0.35">85.020Mhz</text>
<text x="609.6" y="481" fill="#000" font-size="6" font-weight="bold" textLength="25.8" lengthAdjust="spacingAndGlyphs" text-anchor="start" stroke="#000" stroke-width="0.35">87.540Mhz</text>
<text x="701.5" y="481" fill="#000" font-size="6" font-weight="bold" textLength="25.8" lengthAdjust="spacingAndGlyphs" text-anchor="start" stroke="#000" stroke-width="0.35">90.000Mhz</text>
</svg>
</div>
</body></html>
